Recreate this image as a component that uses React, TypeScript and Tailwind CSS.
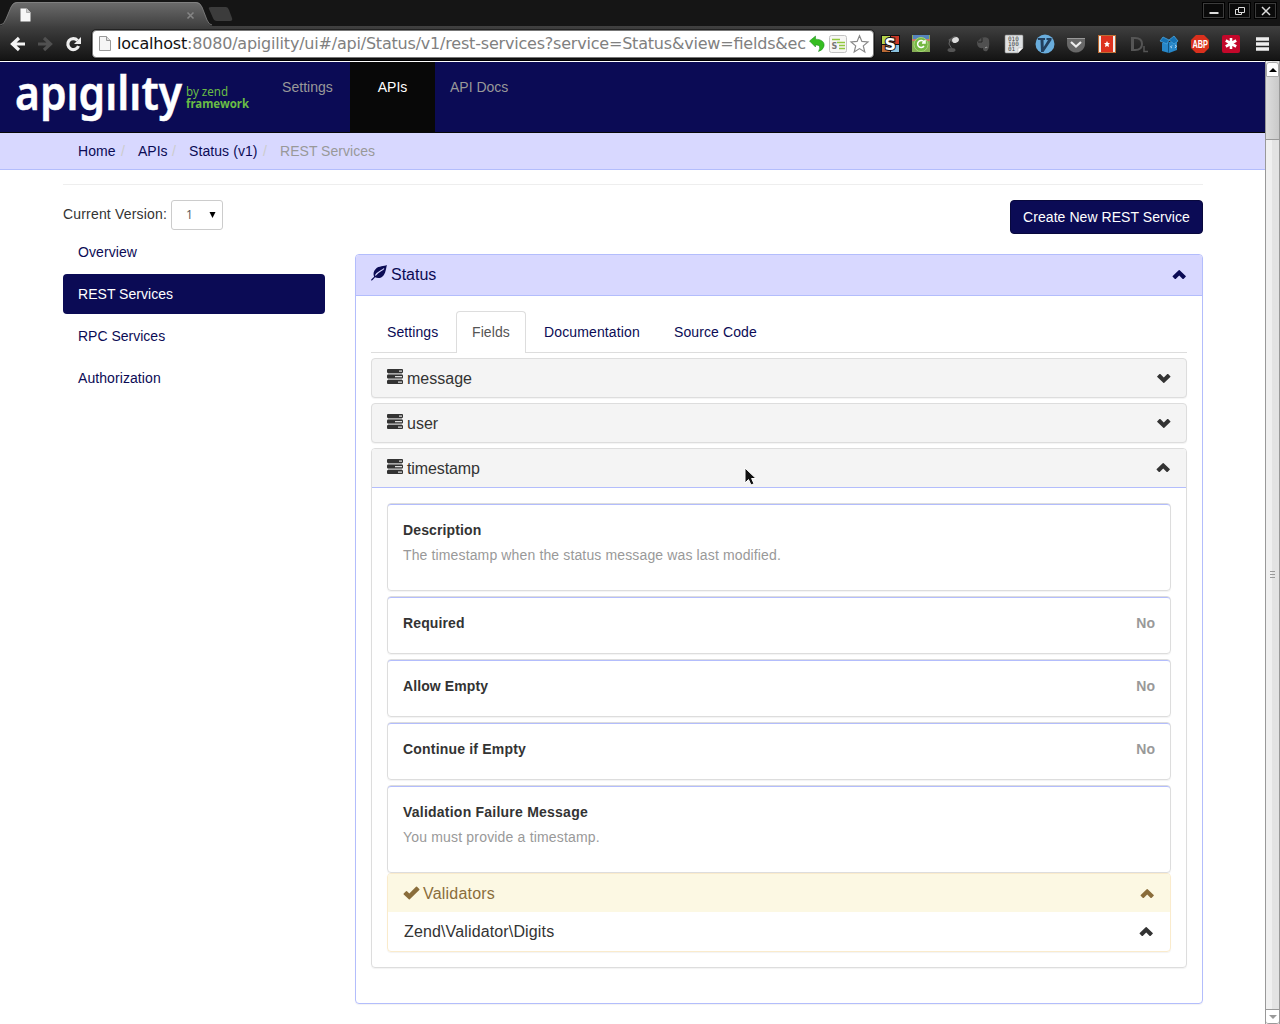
import type { ReactNode } from 'react';

const shadow = 'shadow-[0_1px_1px_rgba(0,0,0,0.05)]';

function Chevron({ down = false, className = '' }: { down?: boolean; className?: string }) {
  return (
    <svg width="14" height="10" viewBox="0 0 14 10" className={`${down ? 'rotate-180' : ''} shrink-0 ${className}`} fill="currentColor">
      <path d="M6.700.3q.5-.5 1 0l6 5.600q.4.400 0 .8l-2.200 2.200q-.4.400-.8 0L7.200 5.600 3.700 8.900q-.4.400-.8 0L.7 6.700q-.4-.4 0-.8z" />
    </svg>
  );
}

function Tasks() {
  return (
    <svg width="16" height="16" viewBox="0 0 16 16" className="mb-[2px] shrink-0">
      <path d="M1 4h14v1.500H1zM1 9.500h14V11H1z" fill="#aaa" />
      <rect y="0" width="16" height="4" rx="1" fill="#333" />
      <rect y="5.500" width="16" height="4" rx="1" fill="#333" />
      <rect y="11" width="16" height="4" rx="1" fill="#333" />
      <path d="M12 1.500h3v1.200h-3zM8 7h7v1.200H8zM11 12.500h4v1.200h-4z" fill="#ddd" />
    </svg>
  );
}

function Leaf() {
  return (
    <svg width="16" height="16" viewBox="0 0 16 16" className="mb-[4px] shrink-0">
      <path d="M15.900.1C13 1.600 8 .8 4.700 3.900 2.300 6.200 2.100 9 3.100 11.700L.2 14.600l.1 1.200 1.300-.9 2.500-2.600c2.700 1.500 6.300 1 8.600-2C15 7.300 15 3 15.900.1z" fill="#0b0b55" />
      <path d="M13 3.500C11 5.900 7.300 6.200 4.300 10.500" stroke="#d8d8ff" strokeWidth="1.100" fill="none" />
    </svg>
  );
}

function Logo() {
  return (
    <svg width="240" height="60" viewBox="0 0 240 60" className="block">
      <text x="0" y="41.500" textLength="167" lengthAdjust="spacingAndGlyphs" fill="#fff" stroke="#fff" strokeWidth="0.5" className="font-['Noto_Sans',sans-serif] text-[47px] font-semibold">apıgılıty</text>
      <text x="171" y="27.500" textLength="42" lengthAdjust="spacingAndGlyphs" fill="#69bd45" className="font-['Noto_Sans',sans-serif] text-[13px]">by zend</text>
      <text x="171" y="40" textLength="63" lengthAdjust="spacingAndGlyphs" fill="#69bd45" className="font-['Noto_Sans',sans-serif] text-[13px] font-bold">framework</text>
    </svg>
  );
}

function Page({ size = 12 }: { size?: number }) {
  return (
    <svg width={size} height={size * 1.25} viewBox="0 0 12 15">
      <path d="M.5.5h7l4 4v10H.5z" fill="#f5f5f5" stroke="#999" />
      <path d="M7.500.5v4h4" fill="#ddd" stroke="#999" />
    </svg>
  );
}

function Ext({ children }: { children: ReactNode }) {
  return (
    <svg width="20" height="20" viewBox="0 0 20 20" className="shrink-0">
      {children}
    </svg>
  );
}

function WindowButton({ children }: { children: ReactNode }) {
  return (
    <div className="flex h-[17px] w-[23px] items-center justify-center border border-black bg-[#0a0a0a] outline outline-1 -outline-offset-2 outline-[#3c3c3c]">
      <svg width="12" height="12" viewBox="0 0 12 12" fill="none" stroke="#ddd">{children}</svg>
    </div>
  );
}

function Browser() {
  return (
    <div className="h-[61px] bg-[#151515]">
      <div className="flex h-[26px] justify-between">
        <div className="relative h-[26px] w-[212px]">
          <svg width="236" height="26" viewBox="0 0 236 26" className="absolute left-0 top-0">
            <defs>
              <linearGradient id="tab" x1="0" y1="0" x2="0" y2="1">
                <stop offset="0" stopColor="#6c6c6c" />
                <stop offset="1" stopColor="#414141" />
              </linearGradient>
            </defs>
            <path d="M0 26Q4 25 6 19l5-12q2-5 6-5h179q4 0 6 5l5 13q2 6 6 6z" fill="url(#tab)" />
            <path d="M0 25Q4 25 6 19l5-12q2-4.500 6-4.500h179q4 0 6 4.500l5 13q2 5 5 5" fill="none" stroke="#858585" strokeWidth=".8" />
            <path d="M211 7h15q2 0 3 3l3 8q1 3-2 3h-13q-3 0-4-3l-4-9q-1-2 2-2z" fill="#3c3c3c" />
            <path d="m187.500 12.500 6 6m0-6-6 6" stroke="#858585" strokeWidth="1.600" />
            <path d="M20.500 8.500h6l4 4v9h-10z" fill="#f7f7f7" />
            <path d="M26.500 8v4.500h4" fill="#ccc" stroke="#999" strokeWidth=".7" />
          </svg>
        </div>
        <div className="flex gap-[3px] pr-[3px] pt-[2px]">
          <WindowButton><path d="M1.500 8h9" strokeWidth="2" /></WindowButton>
          <WindowButton><path d="M4.500 2.500h6v5h-6zM4.500 4.500h-3v5h6v-2" /></WindowButton>
          <WindowButton><path d="m2 2 8 8m0-8-8 8" strokeWidth="1.500" /></WindowButton>
        </div>
      </div>
      <div className="flex h-[34px] items-center bg-linear-to-b from-[#404040] to-[#141414] pl-[9px] pt-[1px]">
        <svg width="82" height="20" viewBox="0 0 82 20" className="shrink-0" fill="none" strokeWidth="3.200">
          <path d="M16 10H4m6-6-6.500 6 6.500 6" stroke="#f4f4f4" />
          <path d="M29 10h12m-6-6 6.500 6-6.500 6" stroke="#505050" />
          <path d="M68.500 6.500A5.500 5.500 0 1 0 69.500 12" stroke="#eee" />
          <path d="M72 3v7h-7z" fill="#eee" />
        </svg>
        <div className="ml-px flex h-[28px] w-[782px] shrink-0 items-center rounded-[4px] border border-[#777] bg-white pl-[6px] outline outline-1 outline-black/40">
          <Page size={12} />
          <svg width="690" height="22" className="ml-[6px] block shrink-0 font-['DejaVu_Sans',sans-serif] text-[16px]">
            <text x="0" y="16" textLength="689" fill="#808080"><tspan fill="#111">localhost</tspan>:8080/apigility/ui#/api/Status/v1/rest-services?service=Status&amp;view=fields&amp;ec</text>
          </svg>
          <svg width="64" height="20" viewBox="0 0 64 20" className="shrink-0">
            <path d="M2.500 7 8.500 2v3.200c6 0 9.500 3 8.500 7q-1 4-5.500 5.300 3.500-7-3-6.500V13z" fill="#35bd20" stroke="#16851a" strokeWidth=".5" />
            <rect x="22.500" y="1.500" width="17" height="17" rx="2" fill="#f7f7f5" stroke="#c2c2c2" />
            <path d="M25 5.500h8m-3 3h8m-6 3h6m-6 3h6" stroke="#92c83e" strokeWidth="1.600" />
            <text x="24.500" y="15" fill="#777" className="font-['DejaVu_Sans',sans-serif] text-[8px] font-bold">S</text>
            <path d="m52.500 1.700 2.400 5.700 6.100.5-4.700 4 1.500 6-5.300-3.300-5.300 3.300 1.500-6-4.700-4 6.100-.5z" fill="#fff" stroke="#888" strokeWidth="1.200" />
          </svg>
        </div>
        <div className="ml-[6px] flex w-[392px] gap-[11px]">
          <Ext>
            <path d="M1 1h19v18H1z" fill="#111" />
            <path d="M2 2h8v8H2z" fill="#b5d44f" /><path d="M11 2h8v8h-8z" fill="#cc3826" /><path d="M2 11h8v7H2z" fill="#b96a36" /><path d="M11 11h8v7h-8z" fill="#8bc3df" />
            <text x="4.500" y="16" fill="#fff" stroke="#111" strokeWidth="2" paintOrder="stroke" className="font-['DejaVu_Sans',sans-serif] text-[16px] font-bold">S</text>
          </Ext>
          <Ext>
            <path d="M1 1h18v17H1z" fill="#86ae55" /><path d="M2 1h16v4H2z" fill="#5684bd" /><path d="M1 5h18v2H1z" fill="#cc7768" />
            <circle cx="10" cy="10.500" r="7" fill="#75b943" stroke="#a6d778" />
            <path d="M13 8a3.500 3.500 0 1 0 0 4M14 6v3h-3" fill="none" stroke="#fff" strokeWidth="1.500" />
          </Ext>
          <Ext><path d="m6 6 6-4q4 0 4 4l-4 3z" fill="#555" /><ellipse cx="13.500" cy="6" rx="3.500" ry="2.800" fill="#ddd" transform="rotate(-25 13.500 6)" /><path d="m8 5-1 5 3 5" stroke="#666" fill="none" /><ellipse cx="9.500" cy="16" rx="4" ry="2" fill="#555" /></Ext>
          <Ext><path d="M4 8 8 4q7-2 8 2 1 8-2 11-4 1-4-3-6 1-6-6z" fill="#505050" /><path d="M9 4v4H5" stroke="#222" fill="none" /><path d="M12 14q2-2 2 0" stroke="#999" fill="none" /></Ext>
          <Ext>
            <path d="M2 1h16q1 0 1 1v12l-5 5H2q-1 0-1-1V2q0-1 1-1z" fill="#dfe1e3" stroke="#888" strokeWidth=".6" />
            <g fill="#444" className="font-['DejaVu_Sans_Mono',monospace] text-[6px]"><text x="4" y="7">010</text><text x="4" y="12">100</text><text x="4" y="17">01</text></g>
            <path d="M14 19v-5h5z" fill="#fff" stroke="#aaa" strokeWidth=".5" />
          </Ext>
          <Ext><circle cx="10" cy="10" r="9.500" fill="#69addd" /><path d="M3 4h7v2H8.500l.2 7L13 6h-1.500V4h5v2L8.500 18H6L5.500 6H3z" fill="#223f5e" /></Ext>
          <Ext><path d="M1 4h18v6q0 4-4 7-5 3-10 0-4-3-4-7z" fill="#686868" /><path d="m5 8 5 4.500L15 8" fill="none" stroke="#eee" strokeWidth="2.200" /><path d="M1 4h18v1H1z" fill="#999" /></Ext>
          <Ext><path d="M1 1h18v18H1z" fill="#bd6b33" /><path d="M2 2h4v16H2zM14 2h4v16h-4z" fill="#eee" /><path d="M4 2h12v16H4z" fill="#dd321f" /><path d="m10 7 1 2h2l-1.500 1.500.5 2.500-2-1-2 1 .5-2.500L7 9h2z" fill="#fff" /></Ext>
          <Ext><path d="M3 3h4q8 0 8 7t-8 7H3zM6 5v10h1q6 0 6-5T7 5z" fill="#555" fillRule="evenodd" /><path d="M16 12v5.500h4" fill="none" stroke="#555" strokeWidth="1.500" /></Ext>
          <Ext><path d="m3 9 7-1 8 0v8l-8 3-7-2z" fill="#2787c9" /><path d="m1 7 3-4 6 3-2 4zM10 6l5-4 4 5-4 3z" fill="#1672b5" stroke="#4aa5dd" strokeWidth=".8" /><path d="M9.500 8.500V19" stroke="#115585" /><path d="m13 11.500-1.500 1.500 1.500 1m3-3 1.500 1-1.500 2" fill="none" stroke="#d9eeff" strokeWidth=".8" /></Ext>
          <Ext><path d="M6 1h8l5 5v8l-5 5H6l-5-5V6z" fill="#d9301d" /><text x="2.500" y="14" textLength="15.500" lengthAdjust="spacingAndGlyphs" fill="#fff" className="font-['Liberation_Sans',sans-serif] text-[11px] font-bold">ABP</text></Ext>
          <Ext><rect x="1" y="1" width="18" height="18" rx="2" fill="#c3072a" /><path d="M10 4v11M4.800 6.500l10.400 6m0-6-10.400 6" stroke="#fff" strokeWidth="2.600" /></Ext>
          <Ext><path d="M4 5h13M4 10h13M4 15h13" stroke="#eee" strokeWidth="3.400" /></Ext>
        </div>
      </div>
      <div className="h-[1px] bg-black" />
    </div>
  );
}

function FieldHeader({ name }: { name: string }) {
  return (
    <div className={`mb-[5px] flex h-[40px] items-center rounded-[4px] border border-[#ddd] bg-[#f4f4f4] pl-[15px] pr-[15px] text-[16px] ${shadow}`}>
      <Tasks />
      <span className="ml-[4px] flex-1 pt-[2px]">{name}</span>
      <Chevron down />
    </div>
  );
}

function Detail({ title, text, tracking, textTracking }: { title: string; text: string; tracking: string; textTracking: string }) {
  return (
    <div className={`h-[88px] rounded-[4px] border border-[#ddd] ${shadow}`}>
      <div className="rounded-t-[3px] border-t border-[#b3bdfc] px-[15px] pt-[15px]">
        <div className={`font-bold leading-5 ${tracking}`}>{title}</div>
        <div className={`mt-[5px] leading-5 text-[#999] ${textTracking}`}>{text}</div>
      </div>
    </div>
  );
}

function Flag({ title, tracking }: { title: string; tracking: string }) {
  return (
    <div className={`h-[58px] rounded-[4px] border border-[#ddd] ${shadow}`}>
      <div className="flex justify-between rounded-t-[3px] border-t border-[#b3bdfc] px-[15px] pt-[15px] font-bold leading-5">
        <span className={tracking}>{title}</span>
        <span className="text-[#999]">No</span>
      </div>
    </div>
  );
}

function Content() {
  return (
    <div className="h-[963px] flex-1 bg-white pt-px">
      <nav className="flex h-[71px] border-b border-[#080808] bg-[#0b0b55] text-[#999]">
        <div className="w-[267px] pl-[15px] pt-[6px]"><Logo /></div>
        <span className="w-[83px] pl-[15px] pt-[15px] tracking-[0.040px]">Settings</span>
        <span className="w-[85px] bg-[#080808] pt-[15px] text-center text-white">APIs</span>
        <span className="pl-[15px] pt-[15px]">API Docs</span>
      </nav>
      <div className="flex h-[37px] items-center border-b border-[#b3bdfc] bg-[#d8d8ff] pl-[78px] text-[#0b0b55]">
        <span className="w-[38px] tracking-[0.100px]">Home</span><span className="w-[22px] pl-[5px] text-[#ccc]">/</span>
        <span className="w-[29px]">APIs</span><span className="w-[22px] pl-[5px] text-[#ccc]">/</span>
        <span className="w-[69px] tracking-[0.080px]">Status (v1)</span><span className="w-[22px] pl-[5px] text-[#ccc]">/</span>
        <span className="tracking-[0.030px] text-[#999]">REST Services</span>
      </div>
      <main className="ml-[63px] mt-[14px] w-[1140px] border-t border-[#eee] pt-[15px]">
        <div className="flex gap-[30px]">
          <aside className="w-[262px]">
            <div className="flex h-[30px] items-center">
              <span className="w-[104px] whitespace-nowrap pb-[2px] tracking-[0.180px]">Current Version:</span>
              <div className="ml-[4px] flex h-[30px] w-[52px] items-center rounded-[3px] border border-[#ccc] pl-[14px] text-[#555]">
                <span className="font-['Open_Sans',sans-serif] text-[12px]">1</span>
                <svg width="7" height="6" className="ml-[16px]"><path d="M.5 0h6L3.500 6z" fill="#000" /></svg>
              </div>
            </div>
            <div className="mt-[2px] flex flex-col gap-[2px] text-[#0b0b55]">
              <a className="px-[15px] py-[10px] tracking-[0.080px]">Overview</a>
              <a className="rounded-[4px] bg-[#0b0b55] px-[15px] py-[10px] tracking-[0.030px] text-white">REST Services</a>
              <a className="px-[15px] py-[10px]">RPC Services</a>
              <a className="px-[15px] py-[10px] tracking-[0.080px]">Authorization</a>
            </div>
          </aside>
          <div className="w-[848px]">
            <div className="flex justify-end">
              <button className="h-[34px] w-[193px] rounded-[4px] border border-[#08083d] bg-[#0b0b55] tracking-[0.060px] text-white">Create New REST Service</button>
            </div>
            <section className={`mt-[20px] h-[750px] rounded-[4px] border border-[#b3bdfc] ${shadow}`}>
              <header className="flex h-[41px] items-center rounded-t-[3px] border-b border-[#b3bdfc] bg-[#d8d8ff] pl-[15px] pr-[16px] text-[16px] text-[#0b0b55]">
                <Leaf />
                <span className="ml-[4px] flex-1">Status</span>
                <Chevron />
              </header>
              <div className="px-[15px] pt-[15px]">
                <div className="flex h-[42px] border-b border-[#ddd] text-[#0b0b55]">
                  <span className="w-[85px] px-[16px] py-[11px] tracking-[0.080px]">Settings</span>
                  <span className="h-[42px] w-[70px] rounded-t-[4px] border border-b-0 border-[#ddd] bg-white px-[15px] py-[10px] tracking-[0.080px] text-[#555]">Fields</span>
                  <span className="ml-[2px] w-[130px] px-[16px] py-[11px] tracking-[0.130px]">Documentation</span>
                  <span className="px-[16px] py-[11px] tracking-[0.100px]">Source Code</span>
                </div>
                <div className="mt-[5px]">
                  <FieldHeader name="message" />
                  <FieldHeader name="user" />
                  <div className={`h-[520px] rounded-[4px] border border-[#ddd] ${shadow}`}>
                    <div className="relative flex h-[39px] items-center rounded-t-[3px] border-b border-[#b3bdfc] bg-[#f4f4f4] pl-[15px] pr-[16px] text-[16px]">
                      <Tasks />
                      <span className="ml-[4px] flex-1 pt-[2px] tracking-[-0.100px]">timestamp</span>
                      <Chevron />
                      <svg width="14" height="20" viewBox="0 0 14 20" className="absolute left-[372px] top-[18px]">
                        <path d="M1 1v15l3.500-3.500L7 18l3-1.300L7.600 11.500H12z" fill="#111" stroke="#fff" strokeWidth="1" />
                      </svg>
                    </div>
                    <div className="flex flex-col p-[15px]">
                      <div className="flex flex-col gap-[5px]">
                        <Detail title="Description" text="The timestamp when the status message was last modified." tracking="tracking-[0.120px]" textTracking="tracking-[0.135px]" />
                        <Flag title="Required" tracking="tracking-[0.120px]" />
                        <Flag title="Allow Empty" tracking="tracking-[0.100px]" />
                        <Flag title="Continue if Empty" tracking="tracking-[0.190px]" />
                        <Detail title="Validation Failure Message" text="You must provide a timestamp." tracking="tracking-[0.230px]" textTracking="tracking-[0.180px]" />
                      </div>
                      <div className={`h-[79px] rounded-[4px] border border-[#faebcc] text-[16px] ${shadow}`}>
                        <div className="flex h-[38px] items-center rounded-t-[3px] bg-[#fcf8e3] pl-[15px] pr-[16px] text-[#8a6d3b]">
                          <svg width="17" height="14" viewBox="0 0 17 14" className="shrink-0"><path d="M.7 7.500 3 5.200q.5-.5 1 0l2.300 2.300L13 .7q.5-.5 1 0L16.300 3q.5.500 0 1L6.800 13.300q-.5.500-1 0L.7 8.500q-.5-.5 0-1z" fill="currentColor" /></svg>
                          <span className="ml-[3px] flex-1 pt-[2px] tracking-[0.200px]">Validators</span>
                          <Chevron className="mt-px" />
                        </div>
                        <div className="flex h-[39px] items-center pl-[16px] pr-[17px]">
                          <span className="flex-1 tracking-[0.140px]">Zend\Validator\Digits</span>
                          <Chevron className="mt-px" />
                        </div>
                      </div>
                    </div>
                  </div>
                </div>
              </div>
            </section>
          </div>
        </div>
      </main>
    </div>
  );
}

function Scrollbar() {
  return (
    <div className="flex h-[963px] w-[15px] flex-col border-x border-[#999] bg-linear-to-r from-[#f0f0f0] from-50% to-[#e3e3e3] to-50% pt-px">
      <div className="flex h-[15px] items-center justify-center rounded-t-[3px] border border-[#aaa] bg-white">
        <svg width="8" height="4"><path d="M4 0 8 4H0z" /></svg>
      </div>
      <div className="h-[63px] border-b border-[#999] bg-linear-to-r from-[#ddd] to-[#c9c9c9]" />
      <div className="flex flex-1 items-center justify-center">
        <svg width="5" height="7"><path d="M0 .5h5M0 3.500h5M0 6.500h5" stroke="#999" /></svg>
      </div>
      <div className="flex h-[15px] items-center justify-center rounded-b-[3px] border-y border-[#999] bg-white">
        <svg width="8" height="4"><path d="M0 0h8L4 4z" fill="#999" /></svg>
      </div>
    </div>
  );
}

export default function App() {
  return (
    <div className="h-[1024px] w-[1280px] overflow-hidden bg-white font-['Liberation_Sans',sans-serif] text-[14px] leading-5 text-[#333]">
      <Browser />
      <div className="flex">
        <Content />
        <Scrollbar />
      </div>
    </div>
  );
}
